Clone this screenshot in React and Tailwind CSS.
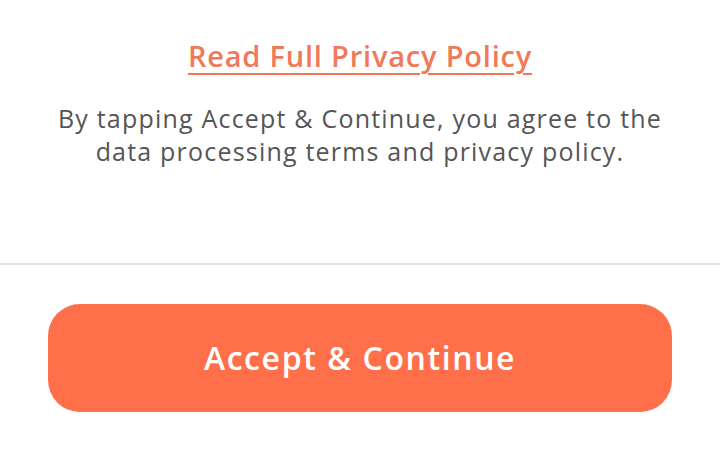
import React from 'react'

export default function App() {
    return (
        <div className="w-[720px] h-[460px] bg-white flex flex-col" style={{ fontFamily: '"Open Sans", Lato, sans-serif' }}>
            <div className="flex flex-col items-center pt-[36px]">
                <a href="#" className="text-[29px] font-semibold text-[#f0795a] underline underline-offset-[6px] decoration-2 leading-[40px] tracking-[0.8px]">
                    Read Full Privacy Policy
                </a>
                <p className="mt-[26px] text-center text-[25px] leading-[33px] text-[#555555] font-medium tracking-[1.2px]">
                    By tapping Accept &amp; Continue, you agree to the
                    <br />
                    data processing terms and privacy policy.
                </p>
            </div>
            <div className="mt-[95px] h-[2px] bg-[#e3e3e3]" />
            <div className="px-[48px] pt-[39px]">
                <button className="w-full h-[108px] rounded-[32px] bg-[#ff6f4a] text-white text-[32px] font-semibold tracking-[1.6px]">
                    Accept &amp; Continue
                </button>
            </div>
        </div>
    )
}
